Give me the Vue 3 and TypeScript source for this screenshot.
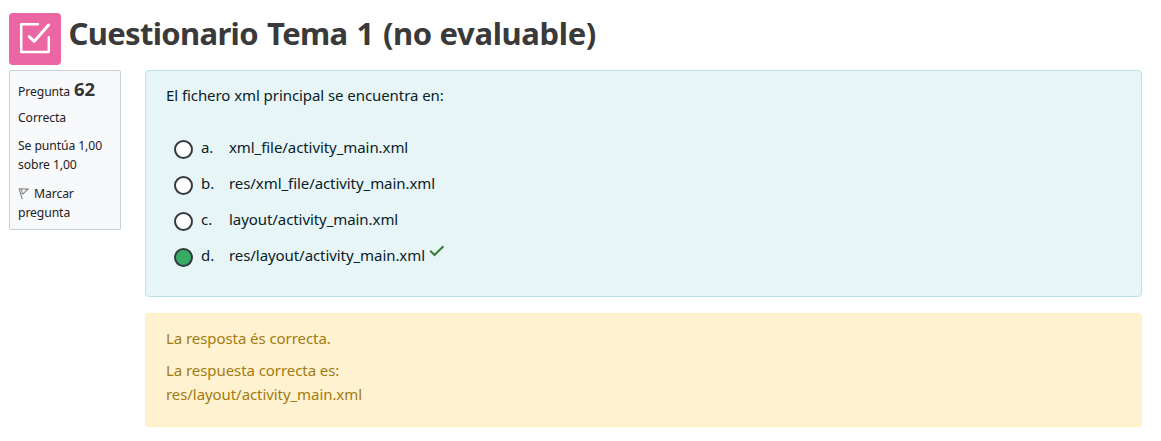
<script setup lang="ts">
interface Option {
  letter: string
  text: string
  checked: boolean
}

const options: Option[] = [
  { letter: 'a.', text: 'xml_file/activity_main.xml', checked: false },
  { letter: 'b.', text: 'res/xml_file/activity_main.xml', checked: false },
  { letter: 'c.', text: 'layout/activity_main.xml', checked: false },
  { letter: 'd.', text: 'res/layout/activity_main.xml', checked: true },
]
</script>

<template>
  <main class="page">
    <header class="header">
      <div class="badge">
        <svg width="52" height="52" viewBox="0 0 52 52" fill="none" stroke="#fff" stroke-width="2.5" stroke-linecap="round" stroke-linejoin="round">
          <path d="M29 11.3H12.2V39H39.8V24.2" />
          <path d="M20.2 23.6L25.3 28.3L39.6 12" stroke-width="3" />
        </svg>
      </div>
      <h1><span class="lead">Cuestionario Tema 1 </span>(no evaluable)</h1>
    </header>
    <div class="question">
      <aside class="info">
        <h3><span>Pregunta</span><span class="number">62</span></h3>
        <div class="state">Correcta</div>
        <div class="grade">Se puntúa 1,00<br>sobre 1,00</div>
        <div class="flag">
          <svg width="11" height="13" viewBox="0 0 11 13" fill="none" stroke="#858585" stroke-width="1.1">
            <path d="M1 1.4L4.2 12.2M1.2 1.8L10 2.1L4.5 7.4M3.3 2L4.5 7.4" />
          </svg>Marcar<br>pregunta
        </div>
      </aside>
      <div class="content">
        <section class="formulation">
          <p>El fichero xml principal se encuentra en:</p>
          <div class="answers">
            <div v-for="o in options" :key="o.letter" class="row">
              <span class="radio" :class="{ checked: o.checked }"></span>
              <span class="letter">{{ o.letter }}</span>
              <span>{{ o.text }}</span>
              <svg v-if="o.checked" class="tick" width="16" height="12" viewBox="0 0 16 12" fill="none" stroke="#357a32" stroke-width="2">
                <path d="M1.2 5.8L5.5 10L14.4 1.2" />
              </svg>
            </div>
          </div>
        </section>
        <section class="outcome">
          <p class="first">La resposta és correcta.</p>
          <p>La respuesta correcta es:<br>res/layout/activity_main.xml</p>
        </section>
      </div>
    </div>
  </main>
</template>

<style>
body {
  background: #fff;
}
</style>

<style scoped>
.page {
  box-sizing: border-box;
  width: 1161px;
  height: 441px;
  padding: 13px 19px 0 9px;
  font-family: 'Noto Sans', 'Open Sans', sans-serif;
  font-size: 15px;
  line-height: 24px;
  letter-spacing: -0.07px;
  color: #1d2125;
  overflow: hidden;
  white-space: nowrap;
}
.header {
  display: flex;
  height: 57px;
}
.badge {
  width: 52px;
  height: 52px;
  border-radius: 4px;
  background: #eb66a2;
}
.badge svg {
  display: block;
}
h1 {
  margin: 0 0 0 7.5px;
  font-size: 31px;
  line-height: 40px;
  font-weight: 700;
  color: #3a3a3a;
  letter-spacing: -0.35px;
}
.lead {
  letter-spacing: -0.67px;
  word-spacing: 1.8px;
}
.question {
  display: flex;
  align-items: flex-start;
  gap: 24px;
}
.info {
  box-sizing: border-box;
  width: 112px;
  height: 160px;
  padding: 7px 8px;
  border: 1px solid #cad0d7;
  border-radius: 2px;
  background: #f8f9fb;
  font-size: 12.2px;
  line-height: 19px;
  letter-spacing: -0.1px;
}
.info h3 {
  display: flex;
  align-items: baseline;
  margin: -1px 0 0;
  height: 23px;
  line-height: 23px;
  font-size: 12.2px;
  font-weight: 400;
}
.number {
  margin-left: 4px;
  font-size: 18.5px;
  font-weight: 700;
  color: #343434;
}
.state {
  margin-top: 8px;
}
.grade {
  margin-top: 9px;
}
.flag {
  margin-top: 10px;
}
.flag svg {
  margin: 0 5px -2px 0;
}
.content {
  flex: 1;
}
.formulation {
  box-sizing: border-box;
  height: 227px;
  padding: 12px 20px;
  border: 1px solid #b8e3e9;
  border-radius: 4px;
  background: #e7f5f6;
  color: #082229;
}
p {
  margin: 0;
}
.answers {
  margin-top: 22px;
}
.row {
  display: flex;
  align-items: center;
  height: 36px;
  padding-left: 8px;
}
.radio {
  box-sizing: border-box;
  width: 19px;
  height: 19px;
  margin-top: 5px;
  border: 2px solid #343a40;
  border-radius: 50%;
  background: #fff;
}
.radio.checked {
  background: #36ab63;
}
.letter {
  width: 28px;
  margin-left: 8px;
}
.tick {
  margin: -8px 0 0 4px;
}
.outcome {
  box-sizing: border-box;
  height: 114px;
  margin-top: 16px;
  padding: 12px 20px;
  border: 1px solid #ffeebe;
  border-radius: 4px;
  background: #fff2d0;
  color: #a37b10;
}
.first {
  margin-bottom: 8px;
}
</style>
